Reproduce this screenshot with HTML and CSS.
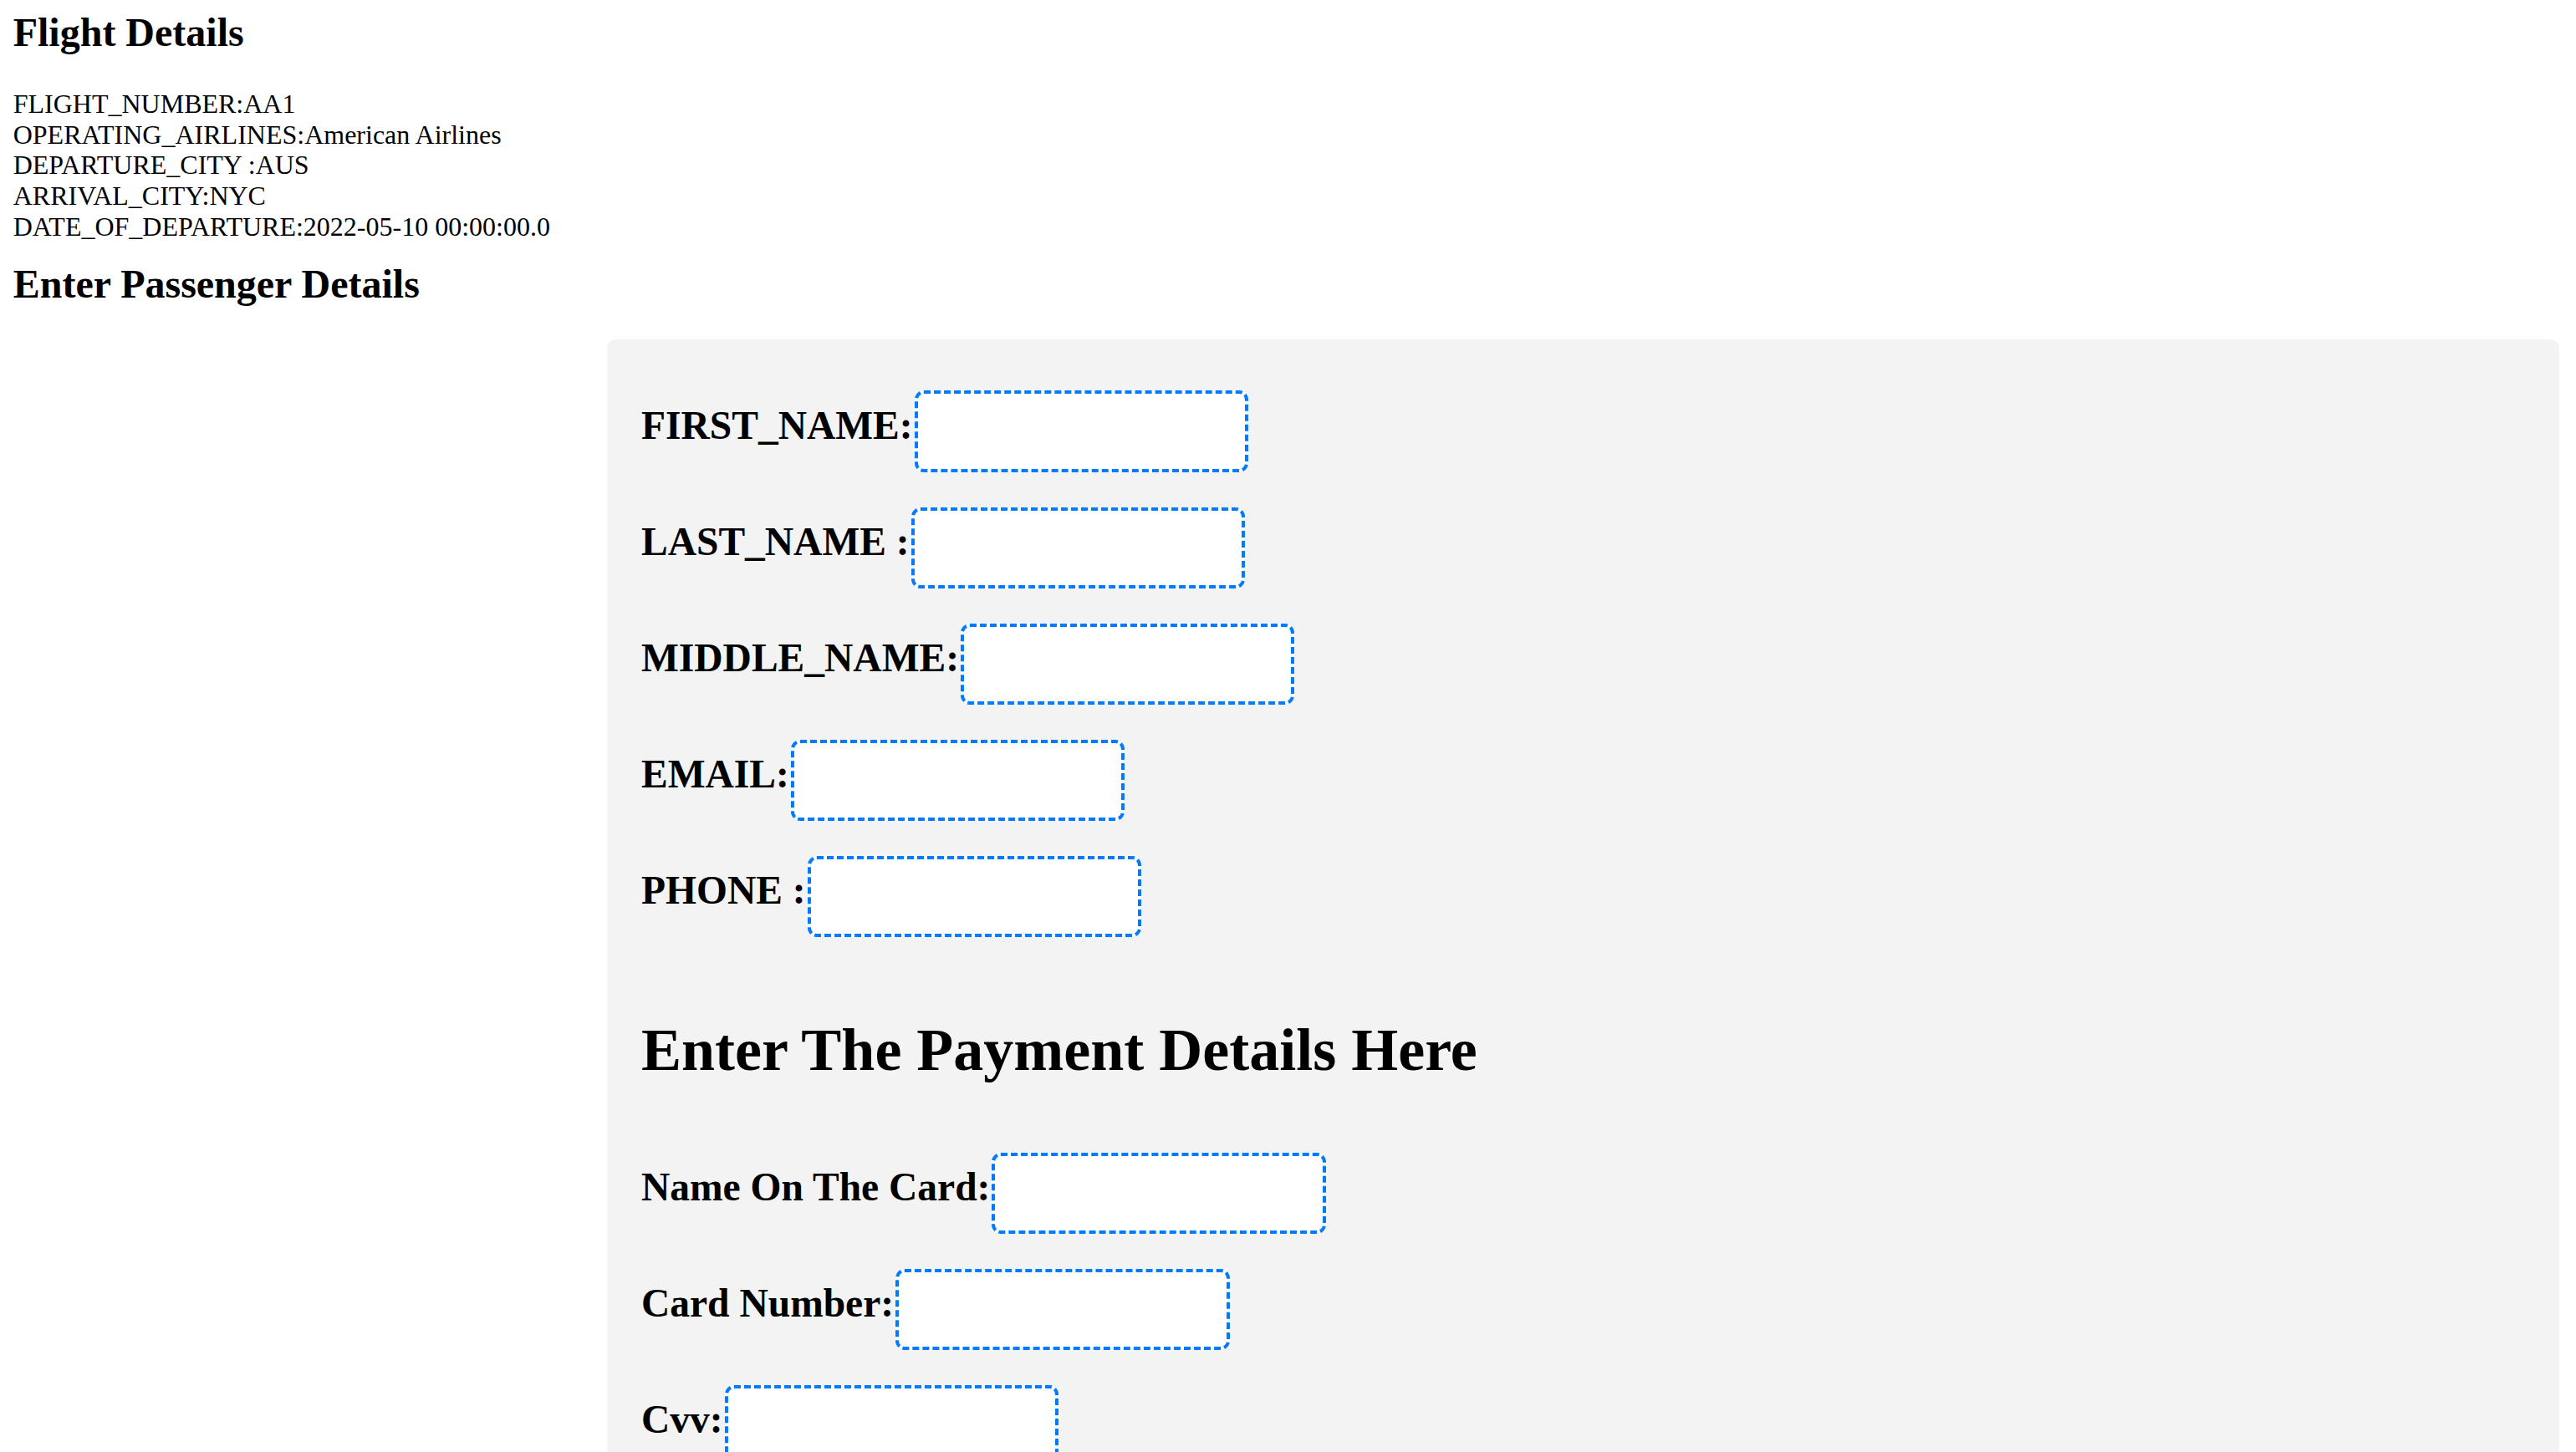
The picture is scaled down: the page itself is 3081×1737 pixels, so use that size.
FILE: index.html
```html
<!DOCTYPE html>
<html lang="en">
<head>
<meta charset="utf-8">
<title>Flight Details</title>
<link rel="stylesheet" href="styles.css">
</head>
<body>
<h2 class="title">Flight Details</h2>
<div class="details">
  <div>FLIGHT_NUMBER:AA1</div>
  <div>OPERATING_AIRLINES:American Airlines</div>
  <div>DEPARTURE_CITY :AUS</div>
  <div>ARRIVAL_CITY:NYC</div>
  <div>DATE_OF_DEPARTURE:2022-05-10 00:00:00.0</div>
</div>
<h2 class="title title-second">Enter Passenger Details</h2>
<form class="panel">
  <div class="row"><label class="label">FIRST_NAME:</label><input class="field" type="text"></div>
  <div class="row"><label class="label">LAST_NAME :</label><input class="field" type="text"></div>
  <div class="row"><label class="label">MIDDLE_NAME:</label><input class="field" type="text"></div>
  <div class="row"><label class="label">EMAIL:</label><input class="field" type="text"></div>
  <div class="row"><label class="label">PHONE :</label><input class="field" type="text"></div>
  <h1 class="pay-heading">Enter The Payment Details Here</h1>
  <div class="row"><label class="label">Name On The Card:</label><input class="field" type="text"></div>
  <div class="row"><label class="label">Card Number:</label><input class="field" type="text"></div>
  <div class="row"><label class="label">Cvv:</label><input class="field" type="text"></div>
</form>
</body>
</html>
```
FILE: styles.css
```css
html, body {
  margin: 0;
  padding: 0;
  background: #ffffff;
}

body {
  padding: 0 0 0 15.7px;
  font-family: "Liberation Serif", "Times New Roman", serif;
  font-size: 32px;
  color: #000000;
}

.title {
  margin: 11.8px 0 0 0;
  font-size: 48px;
  font-weight: bold;
  line-height: 54px;
}

.title-second {
  margin-top: 23px;
}

.details {
  margin-top: 40px;
  line-height: 36.8px;
}

.panel {
  display: flex;
  flex-direction: column;
  align-items: flex-start;
  margin: 39.7px 0 0 710.3px;
  width: 2335px;
  box-sizing: border-box;
  padding: 61px 0 90px 41px;
  background: #f3f3f3;
  border-radius: 10px;
}

.row {
  display: flex;
  align-items: baseline;
}

.row + .row {
  margin-top: 41.5px;
}

.label {
  font-size: 47.5px;
  font-weight: bold;
  line-height: 54px;
}

.field {
  box-sizing: border-box;
  width: 399.5px;
  height: 97.6px;
  margin: 0 0 0 2px;
  padding: 0 4px;
  border: 4px dashed #007bff;
  border-radius: 11px;
  background: #ffffff;
  font-family: "Liberation Sans", Arial, sans-serif;
  font-size: 26.2px;
  outline: none;
}

.pay-heading {
  margin: 93.8px 0 81.3px 0;
  font-size: 72px;
  font-weight: bold;
  line-height: 82px;
}
```
